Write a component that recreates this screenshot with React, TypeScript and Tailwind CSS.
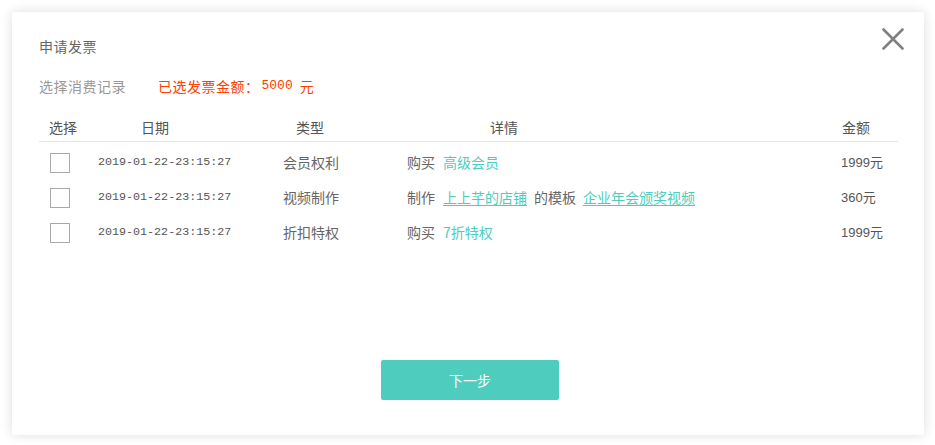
import React from "react";

const cjk = '"Noto Sans CJK SC", "Liberation Sans", sans-serif';
const mono = '"Liberation Mono", "Noto Sans CJK SC", monospace';

const rows = [
  { date: "2019-01-22-23:15:27", type: "会员权利", amount: "1999元", kind: 1 },
  { date: "2019-01-22-23:15:27", type: "视频制作", amount: "360元", kind: 2 },
  { date: "2019-01-22-23:15:27", type: "折扣特权", amount: "1999元", kind: 3 },
];

function Detail({ kind }: { kind: number }) {
  if (kind === 1)
    return (
      <>
        <span>购买</span>
        <span className="ml-[8px] text-[#4ecdbe]">高级会员</span>
      </>
    );
  if (kind === 2)
    return (
      <>
        <span>制作</span>
        <span className="ml-[8px] text-[#4ecdbe] underline underline-offset-2">上上芊的店铺</span>
        <span className="ml-[7px]">的模板</span>
        <span className="ml-[7px] text-[#4ecdbe] underline underline-offset-2">企业年会颁奖视频</span>
      </>
    );
  return (
    <>
      <span>购买</span>
      <span className="ml-[8px] text-[#4ecdbe]">7折特权</span>
    </>
  );
}

export default function App() {
  return (
    <div className="w-[935px] h-[445px] bg-white pt-[12px] pl-[12px]" style={{ fontFamily: cjk }}>
      <div className="relative w-[912px] h-[423px] bg-white rounded-[3px] shadow-[0_0_12px_rgba(0,0,0,0.14)] pl-[27px] pt-[24px]">
        <button className="absolute top-[16px] right-[20px] w-[22px] h-[22px]">
          <svg width="22" height="22" viewBox="0 0 22 22">
            <path d="M1.5 1.5L20.5 20.5M20.5 1.5L1.5 20.5" stroke="#808080" strokeWidth="2.6" strokeLinecap="round" />
          </svg>
        </button>
        <div className="text-[14px] leading-[20px] text-[#666] tracking-[0.5px]">申请发票</div>
        <div className="mt-[20px] flex items-center text-[14px] leading-[20px]">
          <span className="text-[#999] tracking-[0.5px]">选择消费记录</span>
          <span className="ml-[32px] text-[#ff4000] tracking-[0.5px]">已选发票金额：</span>
          <span className="ml-[2px] text-[#ff4000] text-[13px]" style={{ fontFamily: mono }}>5000</span>
          <span className="ml-[7px] text-[#ff4000]">元</span>
        </div>
        <div className="mt-[17px] w-[859px] h-[29px] border-b border-[#e6e6e6] flex items-center text-[14px] text-[#555] pl-[10px]">
          <span className="w-[92px]">选择</span>
          <span className="w-[155px]">日期</span>
          <span className="w-[194px]">类型</span>
          <span className="w-[352px]">详情</span>
          <span>金额</span>
        </div>
        <div className="pt-[3px]">
          {rows.map((r, i) => (
            <div key={i} className="h-[35px] flex items-center text-[14px] text-[#666] pl-[11px]">
              <div className="w-[48px]">
                <div className="w-[20px] h-[20px] border border-[#aaa] bg-white" />
              </div>
              <div className="w-[157px] text-[11.7px] text-[#555]" style={{ fontFamily: mono }}>
                {r.date}
              </div>
              <div className="w-[112px] text-center">{r.type}</div>
              <div className="w-[474px] pl-[40px] flex items-center whitespace-nowrap">
                <Detail kind={r.kind} />
              </div>
              <div className="text-[13px] text-[#555]" style={{ fontFamily: '"Liberation Sans", "Noto Sans CJK SC", sans-serif' }}>
                {r.amount}
              </div>
            </div>
          ))}
        </div>
        <button className="mt-[110px] ml-[342px] w-[178px] h-[40px] rounded-[2px] bg-[#4ecdbe] text-white text-[14px] flex items-center justify-center">
          下一步
        </button>
      </div>
    </div>
  );
}
